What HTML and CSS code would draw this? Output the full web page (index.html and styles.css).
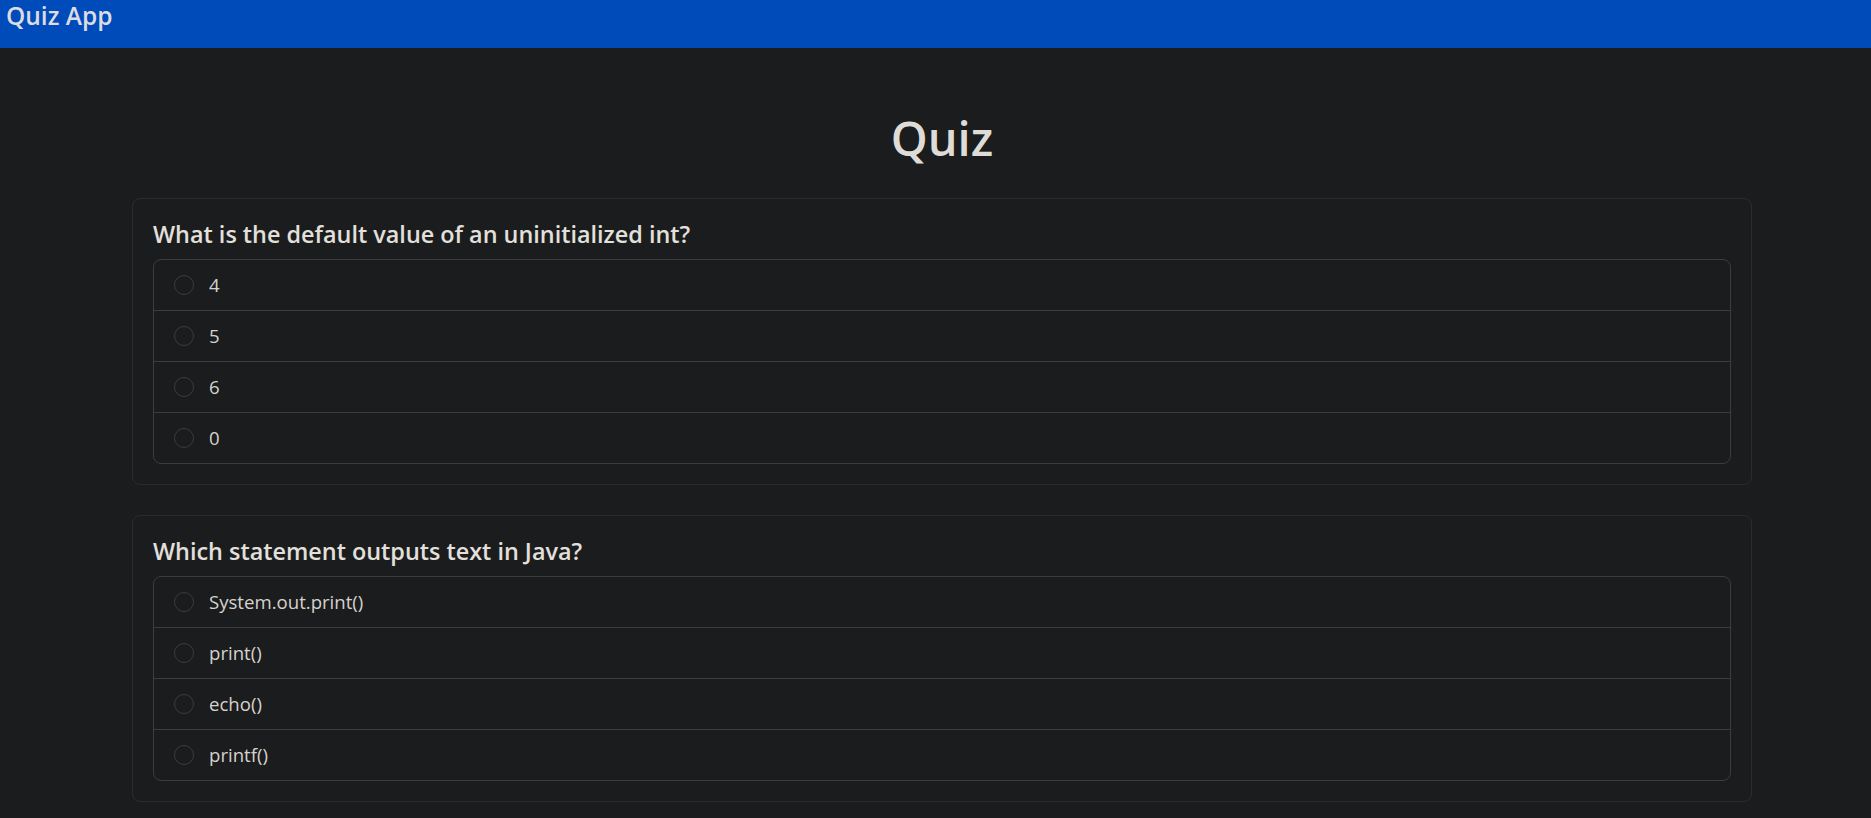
FILE: index.html
```html
<!DOCTYPE html>
<html lang="en">
<head>
<meta charset="utf-8">
<title>Quiz App</title>
<link rel="stylesheet" href="styles.css">
</head>
<body>
<header class="navbar">
  <span class="brand">Quiz App</span>
</header>
<main class="container">
  <h1 class="page-title">Quiz</h1>

  <section class="card">
    <h5 class="question">What is the default value of an uninitialized int?</h5>
    <ul class="options">
      <li class="option"><span class="radio"></span><span class="label">4</span></li>
      <li class="option"><span class="radio"></span><span class="label">5</span></li>
      <li class="option"><span class="radio"></span><span class="label">6</span></li>
      <li class="option"><span class="radio"></span><span class="label">0</span></li>
    </ul>
  </section>

  <section class="card">
    <h5 class="question">Which statement outputs text in Java?</h5>
    <ul class="options">
      <li class="option"><span class="radio"></span><span class="label">System.out.print()</span></li>
      <li class="option"><span class="radio"></span><span class="label">print()</span></li>
      <li class="option"><span class="radio"></span><span class="label">echo()</span></li>
      <li class="option"><span class="radio"></span><span class="label">printf()</span></li>
    </ul>
  </section>
</main>
</body>
</html>
```

FILE: styles.css
```css
* { box-sizing: border-box; }

html, body {
  margin: 0;
  padding: 0;
  background: #1b1c1e;
  color: #dcd8d2;
  font-family: "Open Sans", "Noto Sans", "Liberation Sans", sans-serif;
  overflow: hidden;
}

.navbar {
  height: 48px;
  background: #004bba;
  display: flex;
  align-items: flex-start;
}

.brand {
  padding-left: 6px;
  font-size: 24.5px;
  line-height: 32px;
  font-weight: 600;
  color: #dcdce2;
}

.container {
  margin-left: 132px;
  width: 1620px;
}

.page-title {
  margin: 62px 0 32px;
  text-align: center;
  font-size: 47px;
  line-height: 56px;
  font-weight: 600;
  color: #dfdcd8;
}

.card {
  border: 1px solid #2a2c2f;
  border-radius: 8px;
  padding: 20px;
  margin-bottom: 30px;
}

.question {
  margin: 0 0 10px;
  font-size: 23.4px;
  line-height: 30px;
  font-weight: 600;
  color: #e3e0dc;
}

.options {
  list-style: none;
  margin: 0;
  padding: 0;
  border: 1px solid #3a3d41;
  border-radius: 8px;
}

.option {
  display: flex;
  align-items: center;
  gap: 15px;
  padding: 10px 20px;
  font-size: 18.6px;
  line-height: 30px;
  color: #d6d2cc;
}

.option + .option {
  border-top: 1px solid #3a3d41;
}

.radio {
  width: 20px;
  height: 20px;
  border: 1px solid #393c40;
  border-radius: 50%;
  flex: none;
}
```
